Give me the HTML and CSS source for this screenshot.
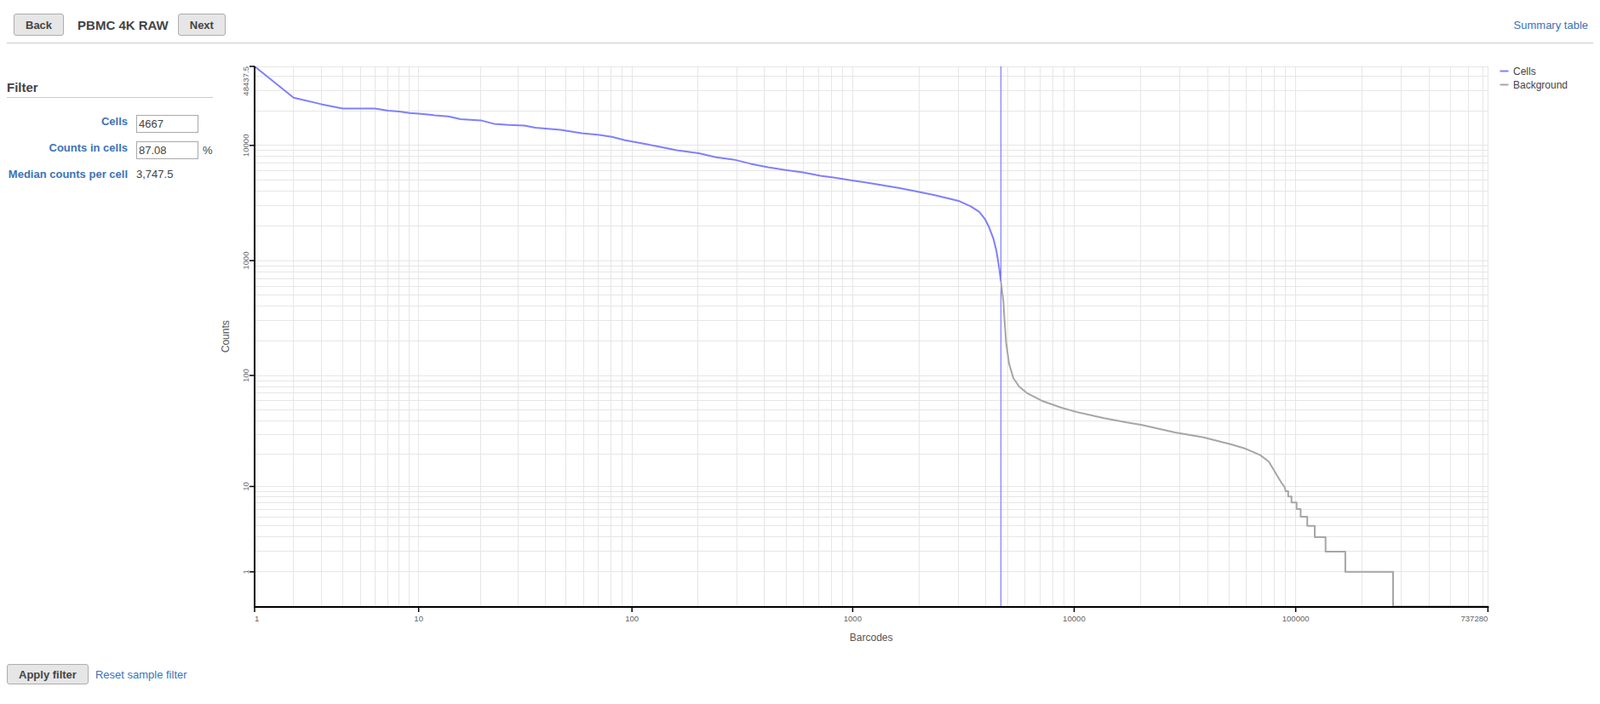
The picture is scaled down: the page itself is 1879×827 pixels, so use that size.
FILE: index.html
```html
<!DOCTYPE html>
<html lang="en">
<head>
  <meta charset="utf-8" />
  <title>PBMC 4K RAW - Filter</title>
  <link rel="stylesheet" href="styles.css">
</head>
<body>
  <div class="topbar">
    <button class="btn">Back</button>
    <span class="sample-name">PBMC 4K RAW</span>
    <button class="btn">Next</button>
    <a class="link summary-link" href="#">Summary table</a>
  </div>

  <div class="main">
    <div class="sidebar">
      <h3 class="section-title">Filter</h3>
      <div class="filter-form">
        <label class="field-label">Cells</label>
        <input class="field" type="text" value="4667">
        <span></span>

        <label class="field-label">Counts in cells</label>
        <input class="field" type="text" value="87.08">
        <span class="unit">%</span>

        <label class="field-label">Median counts per cell</label>
        <span class="field-value">3,747.5</span>
        <span></span>
      </div>
    </div>
    <svg id="chart" class="chart" width="1621" height="700"></svg>
  </div>

  <div class="actions">
    <button class="btn btn-small">Apply filter</button>
    <a class="link" href="#">Reset sample filter</a>
  </div>

<script>
const svgNS = "http://www.w3.org/2000/svg";
const chart = document.getElementById("chart");

// plot area inside the svg
const X0 = 49, X1 = 1497.4, Y0 = 18, Y1 = 652.5;
const xMax = 737280, yMax = 48437.5;
const cellCount = 4667;

// barcode rank vs counts, both on log(v + 1)
const cells = [
  [1, 48437.5], [2, 25940], [3, 22750], [4, 20900], [6, 20900], [7, 20000], [8, 19660],
  [9, 19100], [10, 18880], [12, 18240], [14, 17850], [16, 16870], [20, 16480], [23, 15390],
  [27, 15060], [32, 14880], [36, 14230], [47, 13670], [59, 12770], [71, 12340], [81, 11870],
  [93, 11090], [109, 10480], [134, 9730], [160, 9090], [201, 8550], [241, 7895], [289, 7540],
  [346, 6928], [415, 6471], [498, 6116], [596, 5842], [715, 5459], [819, 5277], [1023, 4932],
  [1286, 4607], [1612, 4280], [1931, 4000], [2326, 3719], [2694, 3474], [3034, 3280],
  [3414, 2961], [3727, 2647], [3957, 2295], [4136, 1936], [4323, 1544], [4450, 1231],
  [4582, 876], [4667, 660]
];

const background = [
  [4667, 660], [4790, 444], [4862, 281], [4936, 189], [5082, 127], [5313, 95], [5636, 80],
  [6159, 69.5], [7133, 60], [8774, 52], [10470, 47.2], [13660, 42], [17280, 38.5],
  [20040, 36.8], [28550, 31.4], [38320, 28.3], [51520, 24.4], [59680, 22.3], [69170, 19.6],
  [75550, 17.1], [78980, 14.7], [82540, 12.6], [86280, 10.8], [88850, 10], [90160, 9],
  [92500, 9], [92500, 8], [95700, 8], [95700, 7], [100900, 7], [100900, 6], [105200, 6],
  [105200, 5], [112700, 5], [112700, 4], [121900, 4], [121900, 3], [136400, 3], [136400, 2],
  [167500, 2], [167500, 1], [275000, 1], [275000, 0], [737280, 0]
];

function sx(v) {
  const lo = Math.log10(2), hi = Math.log10(xMax + 1);
  return X0 + (Math.log10(v + 1) - lo) / (hi - lo) * (X1 - X0);
}
function sy(v) {
  return Y1 - Math.log10(v + 1) / Math.log10(yMax + 1) * (Y1 - Y0);
}
function crisp(p) {
  return Math.round(p - 0.5) + 0.5;
}

function add(name, attrs, text) {
  const node = document.createElementNS(svgNS, name);
  for (const k in attrs) node.setAttribute(k, attrs[k]);
  if (text !== undefined) node.textContent = text;
  chart.appendChild(node);
  return node;
}

function logSteps(max) {
  const out = [];
  for (let d = 1; d <= max; d *= 10) {
    for (let m = 1; m < 10; m++) {
      if (m * d > max) break;
      out.push(m * d);
    }
  }
  out.push(max);
  return out;
}

// grid
logSteps(xMax).forEach(v => {
  const x = crisp(sx(v));
  add("line", { x1: x, x2: x, y1: Y0, y2: Y1, class: "grid" });
});
logSteps(yMax).forEach(v => {
  const y = crisp(sy(v));
  add("line", { x1: X0, x2: X1, y1: y, y2: y, class: "grid" });
});

// cell threshold
const tx = crisp(sx(cellCount));
add("line", { x1: tx, x2: tx, y1: Y0, y2: Y1, class: "threshold" });

// curves
function points(data) {
  return data.map(d => sx(d[0]).toFixed(1) + "," + sy(d[1]).toFixed(1)).join(" ");
}
add("polyline", { points: points(cells), class: "curve curve-cells" });
add("polyline", { points: points(background), class: "curve curve-bg" });

// axes
add("line", { x1: X0, x2: X0, y1: Y0, y2: 654, class: "axis" });
add("line", { x1: X0 - 1, x2: X1 + 1, y1: 653, y2: 653, class: "axis" });

const xTicks = [1, 10, 100, 1000, 10000, 100000, xMax];
xTicks.forEach((v, i) => {
  const x = sx(v);
  add("line", { x1: x, x2: x, y1: 653, y2: 659, class: "tick" });
  const anchor = i === 0 ? "start" : (i === xTicks.length - 1 ? "end" : "middle");
  add("text", { x: x, y: 670, "text-anchor": anchor, class: "tick-label" }, v);
});

const yTicks = [1, 10, 100, 1000, 10000, yMax];
yTicks.forEach((v, i) => {
  const y = sy(v);
  add("line", { x1: X0 - 6, x2: X0, y1: y, y2: y, class: "tick" });
  const anchor = i === yTicks.length - 1 ? "end" : "middle";
  add("text", {
    x: 41.7, y: y, "text-anchor": anchor, class: "tick-label",
    transform: "rotate(-90 41.7 " + y + ")"
  }, v);
});

add("text", { x: (X0 + X1) / 2, y: 692.5, "text-anchor": "middle", class: "axis-title" }, "Barcodes");
add("text", {
  x: 19.3, y: (Y0 + Y1) / 2, "text-anchor": "middle", class: "axis-title",
  transform: "rotate(-90 19.3 " + (Y0 + Y1) / 2 + ")"
}, "Counts");

// legend
[["Cells", "curve-cells"], ["Background", "curve-bg"]].forEach((item, i) => {
  const y = 23.5 + i * 16;
  add("line", { x1: 1511.5, x2: 1521.5, y1: y, y2: y, class: "legend-line " + item[1] });
  add("text", { x: 1527, y: y + 4, class: "legend-label" }, item[0]);
});
</script>
</body>
</html>
```

FILE: styles.css
```css
body {
  margin: 0;
  padding: 0 8px;
  background: #fff;
  color: #444;
  font-family: "Liberation Sans", Arial, sans-serif;
  font-size: 13px;
}

.topbar {
  display: flex;
  align-items: center;
  padding: 16px 6px 8px 8px;
  border-bottom: 1px solid #ccc;
}

.btn {
  height: 26px;
  padding: 0 13px;
  border: 1px solid #adadad;
  border-radius: 3px;
  background: #e6e6e6;
  color: #444;
  font-family: "Liberation Sans", Arial, sans-serif;
  font-size: 13px;
  font-weight: bold;
  cursor: pointer;
}
.btn-small {
  height: 24px;
}

.sample-name {
  margin: 0 11px 0 16px;
  font-size: 15px;
  font-weight: bold;
  color: #444;
}

.link {
  color: #3a73b8;
  text-decoration: none;
}
.summary-link {
  margin-left: auto;
}

.main {
  display: flex;
  margin-top: 9px;
}

.sidebar {
  flex: none;
  width: 242px;
}

.section-title {
  margin: 34px 0 0;
  padding-bottom: 3px;
  border-bottom: 1px solid #ccc;
  font-size: 15px;
  line-height: 17px;
  color: #444;
}

.filter-form {
  display: grid;
  grid-template-columns: 142px max-content auto;
  align-items: start;
  row-gap: 10px;
  margin-top: 20px;
}

.field-label {
  text-align: right;
  white-space: nowrap;
  font-weight: bold;
  line-height: 15px;
  color: #3a73b8;
}

.field {
  box-sizing: border-box;
  width: 73px;
  height: 21px;
  margin: 0 0 0 10px;
  padding: 0 2px;
  border: 1px solid #a9a9a9;
  color: #444;
  font-family: "Liberation Sans", Arial, sans-serif;
  font-size: 13px;
}

.field-value {
  margin-left: 10px;
  line-height: 15px;
}

.unit {
  margin-left: 5px;
  line-height: 21px;
}

.chart {
  display: block;
  flex: none;
}

.chart .grid {
  stroke: #e6e6e6;
  stroke-width: 1;
  shape-rendering: crispEdges;
}
.chart .threshold {
  stroke: #7070ff;
  stroke-width: 1;
  shape-rendering: crispEdges;
}
.chart .curve {
  fill: none;
  stroke-width: 2;
  stroke-linejoin: round;
}
.chart .curve-cells {
  stroke: #7f7fff;
}
.chart .curve-bg {
  stroke: #a6a6a6;
}
.chart .axis {
  stroke: #000;
  stroke-width: 2;
}
.chart .tick {
  stroke: #000;
  stroke-width: 1.5;
}
.chart .tick-label {
  fill: #666;
  font-size: 9.6px;
}
.chart .axis-title {
  fill: #555;
  font-size: 12px;
}
.chart .legend-line {
  stroke-width: 2;
}
.chart .legend-label {
  fill: #444;
  font-size: 12px;
}

.actions {
  display: flex;
  align-items: center;
  gap: 8px;
  margin-top: 20px;
}
```
